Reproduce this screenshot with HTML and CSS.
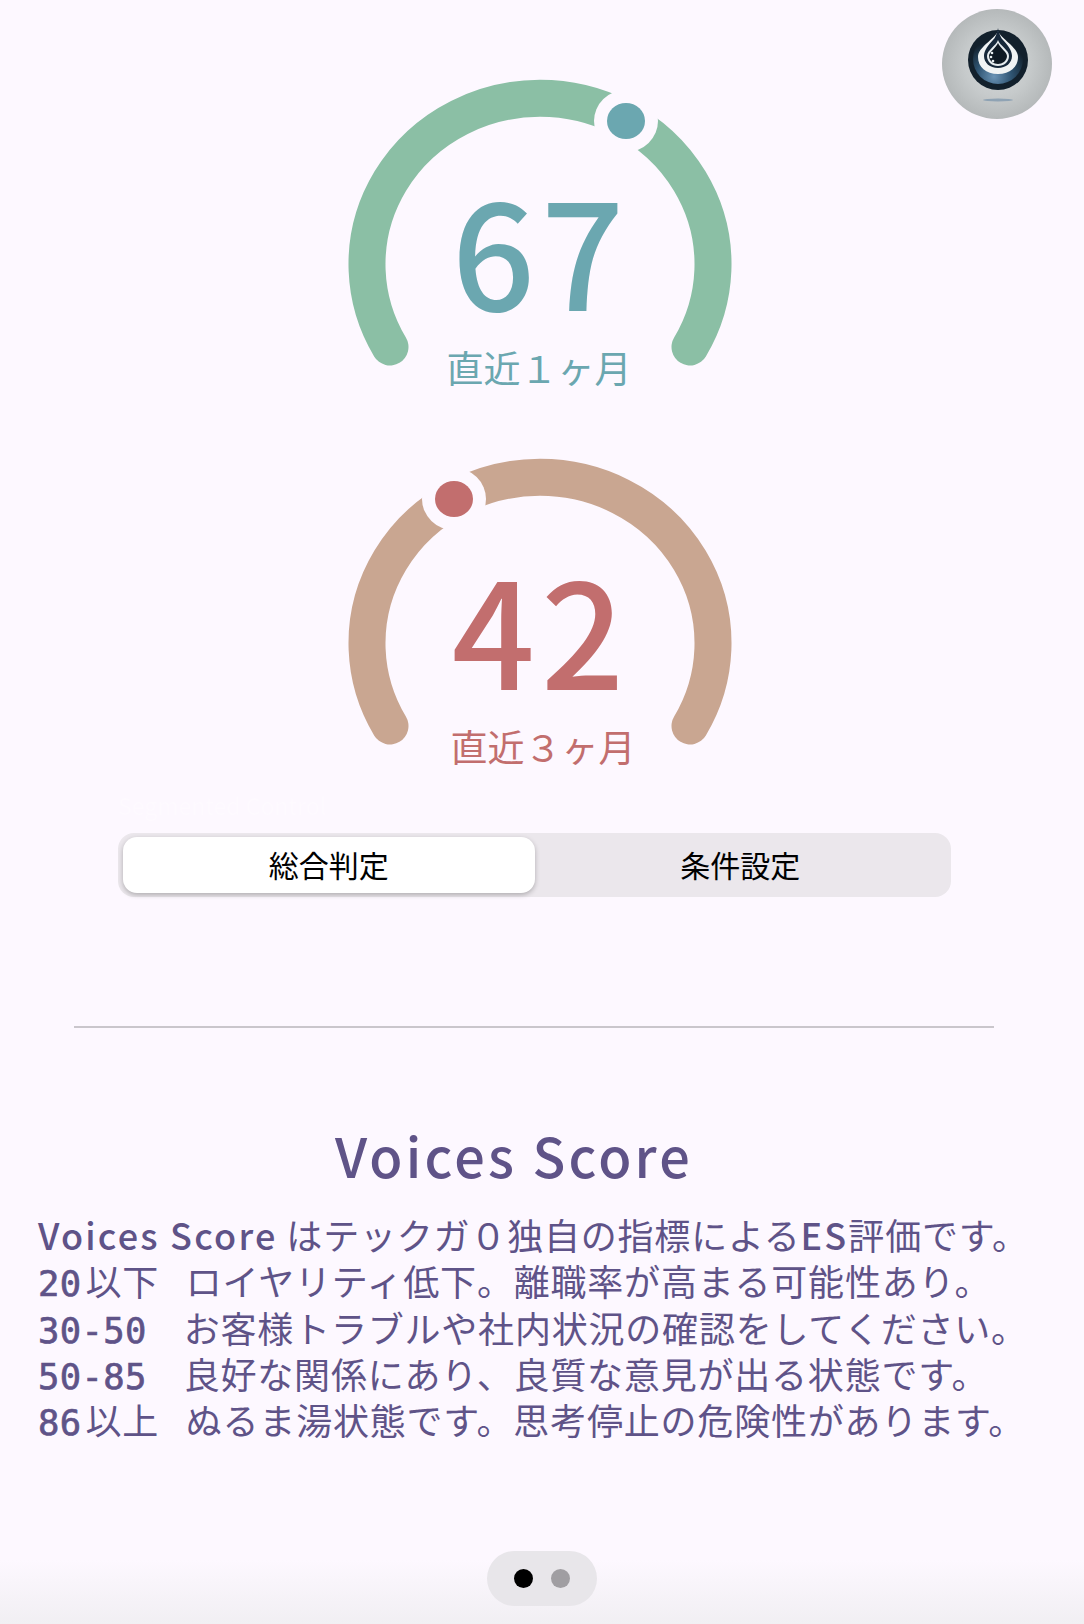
FILE: index.html
```html
<!DOCTYPE html>
<html lang="ja">
<head>
    <meta charset="UTF-8">
    <meta name="viewport" content="width=device-width, initial-scale=1.0">
    <title>Voices Score</title>
    <link rel="stylesheet" href="styles.css">
</head>
<body>

    <svg class="logo" viewBox="0 0 110 110" width="110" height="110">
        <defs>
            <radialGradient id="logoBg" cx="50%" cy="50%" r="50%">
                <stop offset="0" stop-color="#d8dbdc"/>
                <stop offset="0.6" stop-color="#c6cacb"/>
                <stop offset="1" stop-color="#b5b9ba"/>
            </radialGradient>
            <radialGradient id="logoRing" cx="42%" cy="85%" r="70%">
                <stop offset="0" stop-color="#6a93b5"/>
                <stop offset="0.5" stop-color="#2f5472"/>
                <stop offset="1" stop-color="#12202c"/>
            </radialGradient>
        </defs>
        <circle cx="55" cy="55" r="55" fill="url(#logoBg)"/>
        <circle cx="56" cy="51" r="30" fill="#12202c"/>
        <circle cx="56" cy="50" r="25" fill="url(#logoRing)"/>
        <path d="M56 22 C59 30 76 38 76 48 C76 58 68 65 56 65 C44 65 36 58 36 48 C36 38 53 30 56 22Z" fill="#f0f3f4"/>
        <path d="M56 19 C57 25 59 29 61 31 C66 36 70 42 70 47 C70 54 64 59 56 59 C48 59 42 54 42 47 C42 42 46 36 51 31 C53 29 55 25 56 19Z" fill="#16283a"/>
        <path d="M56 31 C58 37 67 41 67 47 C67 53 62 57 56 57 C50 57 45 53 45 47 C45 41 54 37 56 31Z" fill="#e6ecef"/>
        <path d="M56 34 C58 39 65 43 65 47 C65 52 60 55 56 55 C52 55 47 52 47 47 C47 43 54 39 56 34Z" fill="#0f1a24"/>
        <circle cx="50" cy="44" r="1.3" fill="#e6ecef"/>
        <circle cx="49" cy="48" r="1.3" fill="#e6ecef"/>
        <circle cx="51" cy="52" r="1.3" fill="#e6ecef"/>
        <ellipse cx="56" cy="91" rx="15" ry="1.5" fill="#8fa3b4"/>
    </svg>

    <section class="gauge gauge-month">
        <svg class="gauge-arc" viewBox="0 0 400 310" width="400" height="310">
            <path class="arc" d="M50 278 A173 166 0 1 1 350 278"/>
            <ellipse class="dot-ring" cx="286" cy="52" rx="32" ry="31"/>
            <ellipse class="dot" cx="286" cy="52" rx="19" ry="18"/>
        </svg>
        <div class="gauge-value">67</div>
        <div class="gauge-label">直近１ヶ月</div>
    </section>

    <section class="gauge gauge-quarter">
        <svg class="gauge-arc" viewBox="0 0 400 310" width="400" height="310">
            <path class="arc" d="M50 278 A173 166 0 1 1 350 278"/>
            <ellipse class="dot-ring" cx="114" cy="51" rx="32" ry="31"/>
            <ellipse class="dot" cx="114" cy="51" rx="19" ry="18"/>
        </svg>
        <div class="gauge-value">42</div>
        <div class="gauge-label">直近３ヶ月</div>
    </section>

    <div class="segment-title">Segmented Control</div>
    <div class="segment">
        <div class="segment-item active">総合判定</div>
        <div class="segment-item">条件設定</div>
    </div>

    <hr class="divider">

    <h2 class="score-title">Voices Score</h2>
    <div class="score-text">
        <p><b>Voices Score</b> はテックガ０独自の指標による<b>ES</b>評価です。</p>
        <p><b class="num short">20</b>以下   ロイヤリティ低下。離職率が高まる可能性あり。</p>
        <p><b class="num">30-50</b>　お客様トラブルや社内状況の確認をしてください。</p>
        <p><b class="num">50-85</b>　良好な関係にあり、良質な意見が出る状態です。</p>
        <p><b class="num short">86</b>以上   ぬるま湯状態です。思考停止の危険性があります。</p>
    </div>

    <div class="pager">
        <span class="pager-dot current"></span>
        <span class="pager-dot"></span>
    </div>

</body>
</html>
```

FILE: styles.css
```css
* {
    box-sizing: border-box;
}
body {
    position: relative;
    width: 1084px;
    height: 1624px;
    margin: 0;
    padding-top: 69px;
    overflow: hidden;
    font-family: "Noto Sans CJK JP", sans-serif;
    background: linear-gradient(#fdf8ff 1560px, #f1eff3 1624px);
}
.logo {
    position: absolute;
    top: 9px;
    right: 32px;
}
.gauge {
    position: relative;
    width: 400px;
    height: 379px;
    margin-left: 340px;
}
.gauge-quarter {
    height: 342px;
}
.gauge-arc {
    display: block;
}
.arc {
    fill: none;
    stroke-width: 37;
    stroke-linecap: round;
}
.dot-ring {
    fill: #fdf8ff;
}
.gauge-month .arc {
    stroke: #8bbfa5;
}
.gauge-month .dot {
    fill: #6ba7b0;
}
.gauge-month .gauge-value,
.gauge-month .gauge-label {
    color: #6ba7b0;
}
.gauge-quarter .arc {
    stroke: #c9a691;
}
.gauge-quarter .dot {
    fill: #c26e6e;
}
.gauge-quarter .gauge-value,
.gauge-quarter .gauge-label {
    color: #c26e6e;
}
.gauge-value {
    position: absolute;
    top: 104px;
    left: 1px;
    width: 100%;
    text-align: center;
    font-size: 146px;
    font-weight: 500;
    letter-spacing: 6px;
    line-height: 150px;
}
.gauge-label {
    position: absolute;
    top: 276px;
    left: -1px;
    width: 100%;
    text-align: center;
    font-size: 37px;
    line-height: 44px;
}
.gauge-quarter .gauge-label {
    left: 3px;
}
.segment-title {
    height: 30px;
    margin: 0 0 13px 118px;
    color: #fefaff;
    font-size: 23px;
    line-height: 30px;
}
.segment {
    display: flex;
    width: 833px;
    height: 64px;
    margin-left: 118px;
    padding: 4px 5px;
    border-radius: 16px;
    background-color: #ebe7ec;
}
.segment-item {
    flex: 1;
    font-size: 30px;
    line-height: 54px;
    text-align: center;
    color: #000;
}
.segment-item.active {
    border-radius: 14px;
    background-color: #fff;
    box-shadow: 0 2px 5px rgba(0, 0, 0, 0.25);
}
.divider {
    width: 920px;
    height: 2px;
    margin: 129px 0 0 74px;
    border: none;
    background-color: #cac6cc;
}
.score-title {
    width: 1028px;
    margin: 89px 0 0 0;
    text-align: center;
    color: #5f5388;
    font-size: 54px;
    font-weight: 500;
    letter-spacing: 3.2px;
    line-height: 76px;
}
.score-text {
    margin: 18px 0 0 38px;
    color: #5f5388;
    font-size: 36px;
    letter-spacing: 0.8px;
    line-height: 46.3px;
}
.score-text p {
    margin: 0;
    white-space: pre;
}
.score-text b {
    font-weight: 500;
    letter-spacing: 2.2px;
    line-height: 1;
}
.score-text .num {
    font-family: "DejaVu Sans Mono", monospace;
    font-size: 35.5px;
    font-weight: 400;
    letter-spacing: 0.4px;
    -webkit-text-stroke: 0.7px #5f5388;
}
.score-text .short {
    margin-right: 4px;
}
.pager {
    position: absolute;
    left: 487px;
    top: 1551px;
    display: flex;
    align-items: center;
    justify-content: center;
    gap: 18px;
    width: 110px;
    height: 55px;
    border-radius: 28px;
    background-color: #e8e6ea;
}
.pager-dot {
    width: 19px;
    height: 19px;
    border-radius: 50%;
    background-color: #a09ea2;
}
.pager-dot.current {
    background-color: #000;
}
```
